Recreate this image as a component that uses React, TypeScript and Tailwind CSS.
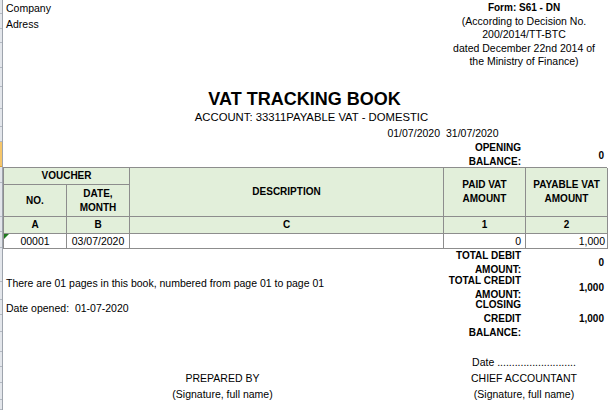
const rowLines = [14, 29, 43, 68, 87, 109, 127, 142, 167, 183, 217, 232, 248, 282, 300, 315, 332, 352, 367, 383, 400, 410];

const RowHeaderStrip = () => {
  let prev = 0;
  return (
    <div className="flex w-[3px] shrink-0 flex-col border-r border-[#9ea4ad] bg-[#e3e6eb]">
      {rowLines.map((y) => {
        const h = y - prev;
        const selected = prev === 142;
        prev = y;
        return (
          <div
            key={y}
            style={{ height: h }}
            className={selected ? "border-b border-[#d9a13b] bg-[#f6c66a]" : "border-b border-[#b3b9c2]"}
          />
        );
      })}
    </div>
  );
};

const cell = "border-r border-b border-[#8d8d8d]";

const App = () => {
  return (
    <div className="flex h-[410px] w-[616px] overflow-hidden bg-white font-['Liberation_Sans',Arial,sans-serif] text-[10.5px] text-black">
      <RowHeaderStrip />

      <div className="w-[613px]">
        {/* header */}
        <div className="grid h-[70px] grid-cols-[439px_164px]">
          <div className="pl-[3px] leading-[16px]">
            <div>Company</div>
            <div>Adress</div>
          </div>
          <div className="pt-[1px] text-center leading-[13.6px]">
            <div className="text-[10px] font-bold">Form: S61 - DN</div>
            <div>(According to Decision No.</div>
            <div>200/2014/TT-BTC</div>
            <div>dated December 22nd 2014 of</div>
            <div>the Ministry of Finance)</div>
          </div>
        </div>

        <div className="mt-[18px] w-[603px] text-center text-[18px] font-bold leading-[22px]">
          VAT TRACKING BOOK
        </div>
        <div className="w-[603px] pl-[14px] text-center text-[11.3px] leading-[14px]">
          ACCOUNT: 33311PAYABLE VAT - DOMESTIC
        </div>

        <div className="mt-[2px] grid grid-cols-[439px_164px] leading-[14px]">
          <div className="pr-[2px] text-right">01/07/2020</div>
          <div className="pl-[4px]">31/07/2020</div>
        </div>

        <div className="mt-[1px] grid h-[26px] grid-cols-[439px_82px_82px] text-[10px] font-bold">
          <div />
          <div className="pr-[3px] text-right leading-[14px]">
            <div>OPENING</div>
            <div>BALANCE:</div>
          </div>
          <div className="flex items-center justify-end pr-[2px]">0</div>
        </div>

        {/* table */}
        <div className="grid w-[604px] grid-cols-[63px_63px_314px_82px_82px] grid-rows-[17px_32px_17px_15px] border-t border-l border-[#8d8d8d] text-[10px] font-bold leading-[14px]">
          <div className={`${cell} col-span-2 flex items-center justify-center bg-[#e2efda]`}>VOUCHER</div>
          <div className={`${cell} row-span-2 flex items-center justify-center bg-[#e2efda]`}>DESCRIPTION</div>
          <div className={`${cell} row-span-2 flex items-center justify-center bg-[#e2efda] text-center`}>
            PAID VAT
            <br />
            AMOUNT
          </div>
          <div className={`${cell} row-span-2 flex items-center justify-center bg-[#e2efda] text-center`}>
            PAYABLE VAT
            <br />
            AMOUNT
          </div>
          <div className={`${cell} flex items-center justify-center bg-[#e2efda]`}>NO.</div>
          <div className={`${cell} flex items-center justify-center bg-[#e2efda] text-center`}>
            DATE,
            <br />
            MONTH
          </div>

          <div className={`${cell} flex items-center justify-center bg-[#e2efda]`}>A</div>
          <div className={`${cell} flex items-center justify-center bg-[#e2efda]`}>B</div>
          <div className={`${cell} flex items-center justify-center bg-[#e2efda]`}>C</div>
          <div className={`${cell} flex items-center justify-center bg-[#e2efda]`}>1</div>
          <div className={`${cell} flex items-center justify-center bg-[#e2efda]`}>2</div>

          <div className={`${cell} relative flex items-center justify-center text-[10.5px] font-normal`}>
            <svg className="absolute left-0 top-0" width="5" height="5" viewBox="0 0 5 5">
              <polygon points="0,0 5,0 0,5" fill="#1e7a1e" />
            </svg>
            00001
          </div>
          <div className={`${cell} flex items-center justify-center text-[10.5px] font-normal`}>03/07/2020</div>
          <div className={cell} />
          <div className={`${cell} flex items-center justify-end pr-[4px] text-[10.5px] font-normal`}>0</div>
          <div className={`${cell} flex items-center justify-end pr-[2px] text-[10.5px] font-normal`}>1,000</div>
        </div>

        {/* totals */}
        <div className="grid grid-cols-[439px_164px]">
          <div className="pl-[3px] pt-[27px] leading-[14px]">
            <div>There are 01 pages in this book, numbered from page 01 to page 01</div>
            <div className="mt-[11px] whitespace-pre">Date opened:  01-07-2020</div>
          </div>
          <div className="text-[10px] font-bold leading-[14px]">
            <div className="grid grid-cols-[82px_82px]">
              <div className="pr-[3px] text-right">
                <div>TOTAL DEBIT</div>
                <div>AMOUNT:</div>
              </div>
              <div className="flex items-center justify-end pr-[2px]">0</div>
            </div>
            <div className="mt-[-3px] grid grid-cols-[82px_82px]">
              <div className="pr-[3px] text-right">
                <div>TOTAL CREDIT</div>
                <div>AMOUNT:</div>
              </div>
              <div className="flex items-center justify-end pr-[2px]">1,000</div>
            </div>
            <div className="mt-[-4px] grid grid-cols-[82px_82px]">
              <div className="pr-[3px] text-right">
                <div>CLOSING</div>
                <div>CREDIT</div>
                <div>BALANCE:</div>
              </div>
              <div className="flex items-center justify-end pr-[2px]">1,000</div>
            </div>
          </div>
        </div>

        {/* signatures */}
        <div className="mt-[14px] grid grid-cols-[439px_164px] text-center leading-[16px]">
          <div>
            <div>&nbsp;</div>
            <div>PREPARED BY</div>
            <div>(Signature, full name)</div>
          </div>
          <div>
            <div>Date ...........................</div>
            <div>CHIEF ACCOUNTANT</div>
            <div>(Signature, full name)</div>
          </div>
        </div>
      </div>
    </div>
  );
};

export default App;
